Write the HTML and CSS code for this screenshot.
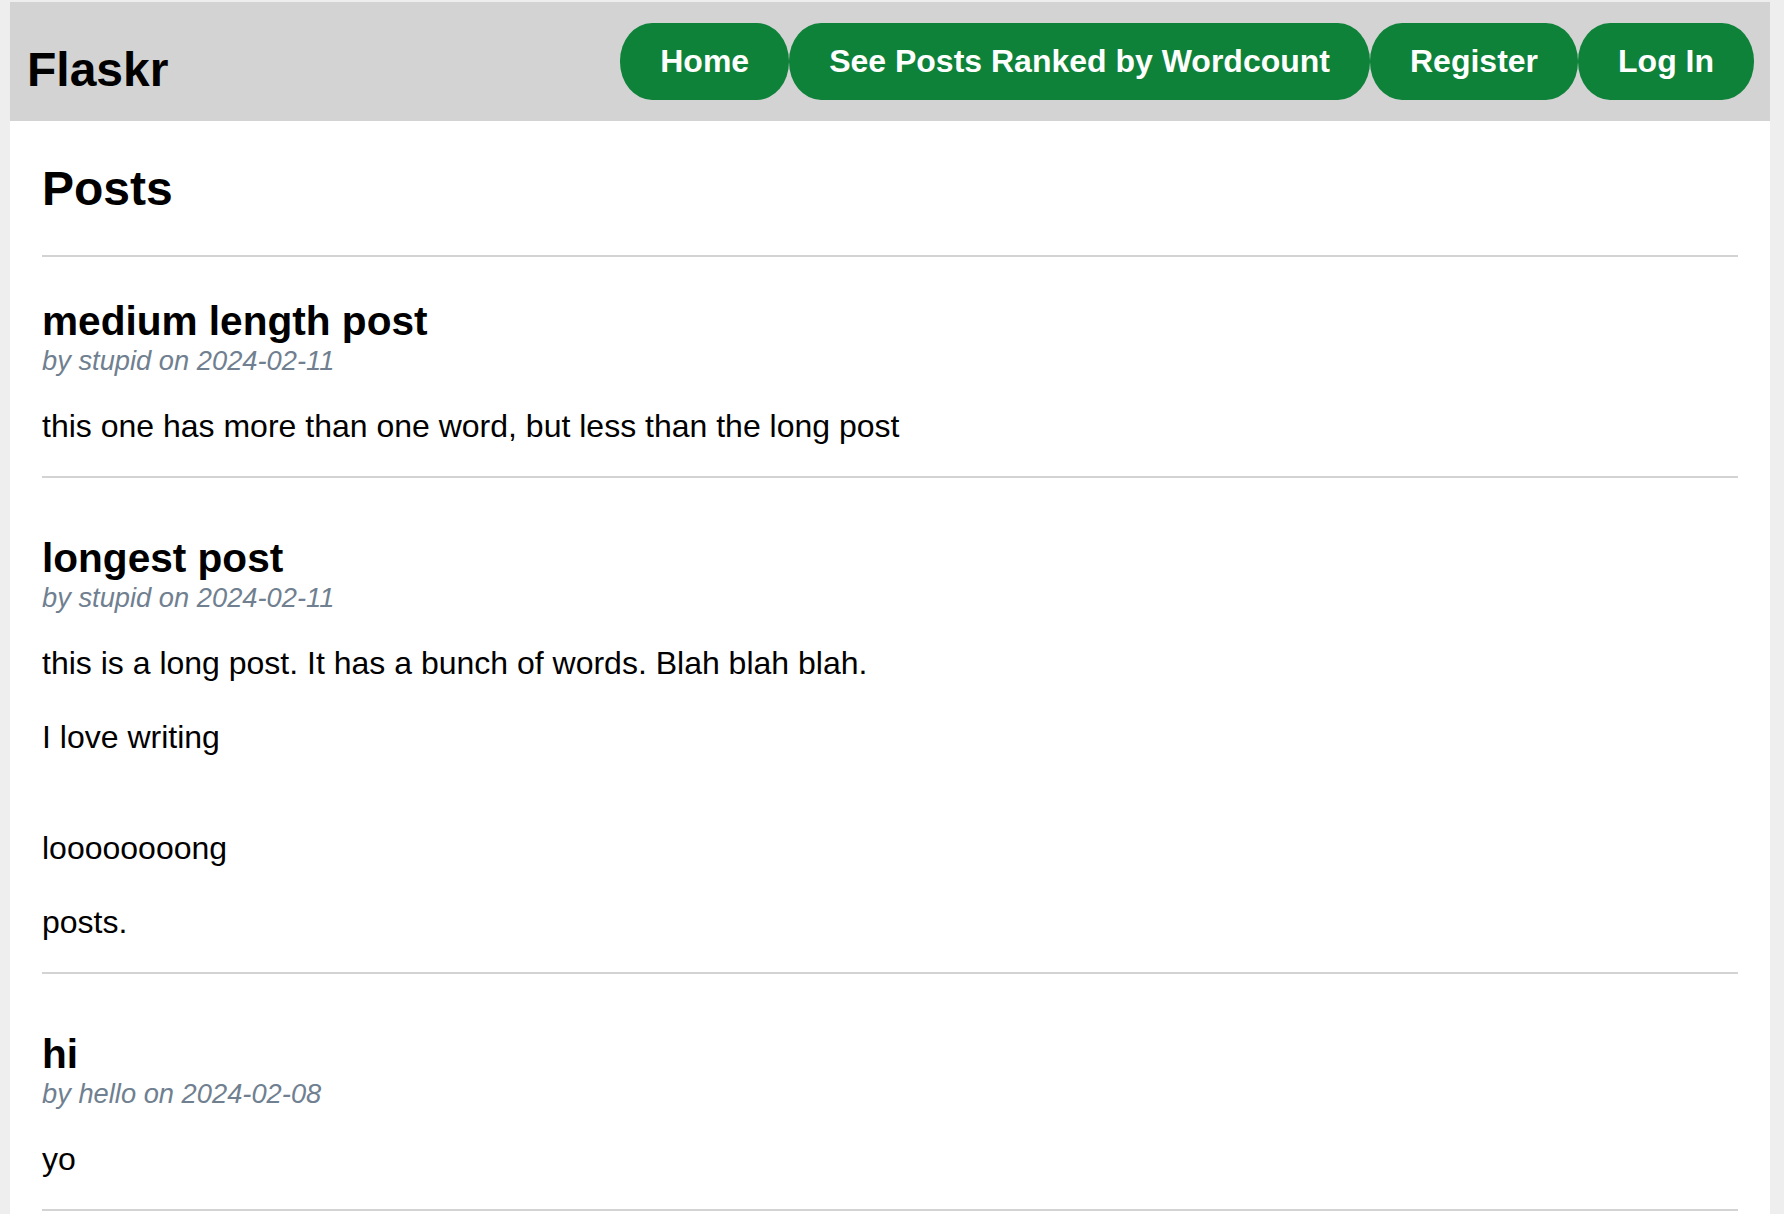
FILE: index.html
```html
<!DOCTYPE html>
<html lang="en">
<head>
<meta charset="utf-8">
<title>Posts - Flaskr</title>
<link rel="stylesheet" href="styles.css">
</head>
<body>
<nav class="nav">
  <h1 class="brand">Flaskr</h1>
  <ul class="nav-links">
    <li><a class="btn" href="#">Home</a></li>
    <li><a class="btn" href="#">See Posts Ranked by Wordcount</a></li>
    <li><a class="btn" href="#">Register</a></li>
    <li><a class="btn" href="#">Log In</a></li>
  </ul>
</nav>
<main class="content">
  <header class="page-header">
    <h1 class="page-title">Posts</h1>
  </header>
  <article class="post post-first">
    <header>
      <h2 class="post-title">medium length post</h2>
      <div class="about">by stupid on 2024-02-11</div>
    </header>
    <p class="post-body">this one has more than one word, but less than the long post</p>
  </article>
  <hr class="sep">
  <article class="post">
    <header>
      <h2 class="post-title">longest post</h2>
      <div class="about">by stupid on 2024-02-11</div>
    </header>
    <p class="post-body">this is a long post. It has a bunch of words. Blah blah blah.<br><br>I love writing<br><br><br>loooooooong<br><br>posts.</p>
  </article>
  <hr class="sep">
  <article class="post">
    <header>
      <h2 class="post-title">hi</h2>
      <div class="about">by hello on 2024-02-08</div>
    </header>
    <p class="post-body">yo</p>
  </article>
  <hr class="sep">
</main>
</body>
</html>
```
FILE: styles.css
```css
html {
  background: #eeeeee;
}

body {
  margin: 2px 14px 0 10px;
  background: #ffffff;
  font-family: "Liberation Sans", Arial, Helvetica, sans-serif;
  font-size: 32px;
  color: #000000;
}

.nav {
  display: flex;
  align-items: center;
  justify-content: space-between;
  height: 119px;
  padding: 0 16px 0 17px;
  background: #d3d3d3;
}

.brand {
  margin: 16px 0 0;
  font-size: 48px;
  font-weight: bold;
  line-height: 56px;
}

.nav-links {
  display: flex;
  list-style: none;
  margin: 0;
  padding: 0;
}

.btn {
  display: block;
  padding: 20px 40px;
  background: #0e8239;
  color: #ffffff;
  font-size: 32px;
  font-weight: bold;
  line-height: 37px;
  text-decoration: none;
  border-radius: 32px / 38px;
}

.content {
  display: flex;
  flex-direction: column;
  padding: 0 32px;
}

.page-header {
  padding: 40px 0 38px;
  border-bottom: 2px solid #d3d3d3;
}

.page-title {
  margin: 0;
  font-size: 48px;
  font-weight: bold;
  line-height: 56px;
}

.post {
  padding-top: 41px;
}

.post-title {
  margin: 0;
  font-size: 40.6px;
  font-weight: bold;
  line-height: 47px;
}

.about {
  color: #708090;
  font-style: italic;
  font-size: 27.3px;
  line-height: 31px;
}

.post-body {
  margin: 32px 0 31px;
  line-height: 37px;
}

.sep {
  margin: 0 0 16px;
  border: none;
  border-top: 2px solid #d3d3d3;
  height: 0;
}
```
